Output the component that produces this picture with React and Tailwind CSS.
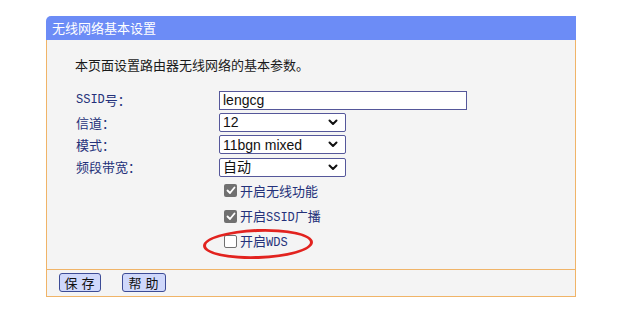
import { Fragment } from 'react';

const cjk = { fontFamily: '"Noto Sans CJK SC", "Liberation Sans", sans-serif' };
const mono = { fontFamily: '"Liberation Mono", "Noto Sans CJK SC", monospace' };

function Chevron() {
  return (
    <svg width="10" height="7" viewBox="0 0 10 7" className="mr-[7px]">
      <path d="M1.5 1.5 L5 5 L8.5 1.5" fill="none" stroke="#111" strokeWidth="2" strokeLinecap="round" strokeLinejoin="round" />
    </svg>
  );
}

function Select({ value }) {
  return (
    <div className="flex h-[19px] w-[127px] items-center justify-between rounded-[2px] border border-[#55579a] bg-white pl-[3px] text-[14px] leading-none text-[#111]">
      <span>{value}</span>
      <Chevron />
    </div>
  );
}

function Check({ checked, children }) {
  return (
    <div className="flex h-[25.5px] items-center gap-[3px] pl-[5px]">
      {checked ? (
        <span className="flex h-[13px] w-[13px] items-center justify-center rounded-[2px] bg-[#707070]">
          <svg width="10" height="9" viewBox="0 0 10 9">
            <path d="M1.5 4.5 L4 7 L8.5 1.5" fill="none" stroke="#fff" strokeWidth="1.8" strokeLinecap="round" strokeLinejoin="round" />
          </svg>
        </span>
      ) : (
        <span className="h-[13px] w-[13px] rounded-[2px] border border-[#707070] bg-white" />
      )}
      <span className="text-[13px] text-[#24317a]">{children}</span>
    </div>
  );
}

export default function App() {
  const rows = [
    { label: <><span style={mono} className="text-[12px]">SSID</span>号：</>, control: (
      <div className="flex h-[19px] w-[248px] items-center border border-[#55579a] bg-white pl-[3px] text-[14px] text-[#111]" style={{ fontFamily: '"Liberation Sans", sans-serif' }}>lengcg</div>
    ) },
    { label: '信道：', control: <Select value="12" /> },
    { label: '模式：', control: <Select value="11bgn mixed" /> },
    { label: '频段带宽：', control: <Select value="自动" /> },
  ];

  return (
    <div className="h-[320px] w-[640px] bg-white pt-[16px] pl-[46px]" style={cjk}>
      <div className="w-[530px]">
        <div className="flex h-[24px] items-center rounded-tl-[5px] bg-[#6c8cf6] pl-[6px] text-[13px] text-white">
          无线网络基本设置
        </div>
        <div className="border-x border-[#f0b468] bg-[#f4f4f4] pt-[15px] pb-[14px] pl-[28px]">
          <div className="h-[20px] text-[13px] leading-[20px] text-[#1a1a1a]">本页面设置路由器无线网络的基本参数。</div>
          <div className="mt-[14px] grid grid-cols-[144px_auto] items-center" style={{ fontFamily: '"Liberation Sans", "Noto Sans CJK SC", sans-serif' }}>
            {rows.map((r, i) => (
              <Fragment key={i}>
                <div className="flex h-[22.3px] items-center pl-[1px] text-[13px] text-[#24317a]" style={cjk}>{r.label}</div>
                <div className="flex h-[22.3px] items-center">{r.control}</div>
              </Fragment>
            ))}
            <div />
            <div style={cjk}>
              <Check checked>开启无线功能</Check>
              <Check checked>开启<span style={mono} className="text-[12px]">SSID</span>广播</Check>
              <div className="relative">
                <Check><>开启<span style={mono} className="text-[12px]">WDS</span></></Check>
                <div className="absolute left-[-16px] top-[0px] h-[30px] w-[110px] rounded-[50%] border-[3px] border-[#e2231f] -rotate-[2deg]" />
              </div>
            </div>
          </div>
        </div>
        <div className="flex h-[28px] items-center gap-[21px] border border-[#f0b468] bg-[#f4f4f4] pl-[12px]" style={cjk}>
          <button className="h-[19px] w-[42px] rounded-[3px] border border-[#3d4c96] bg-[#cfd8fb] text-[13px] leading-none tracking-[4px] text-[#111] pl-[3px]">保存</button>
          <button className="h-[19px] w-[44px] rounded-[3px] border border-[#3d4c96] bg-[#cfd8fb] text-[13px] leading-none tracking-[4px] text-[#111] pl-[3px]">帮助</button>
        </div>
      </div>
    </div>
  );
}
